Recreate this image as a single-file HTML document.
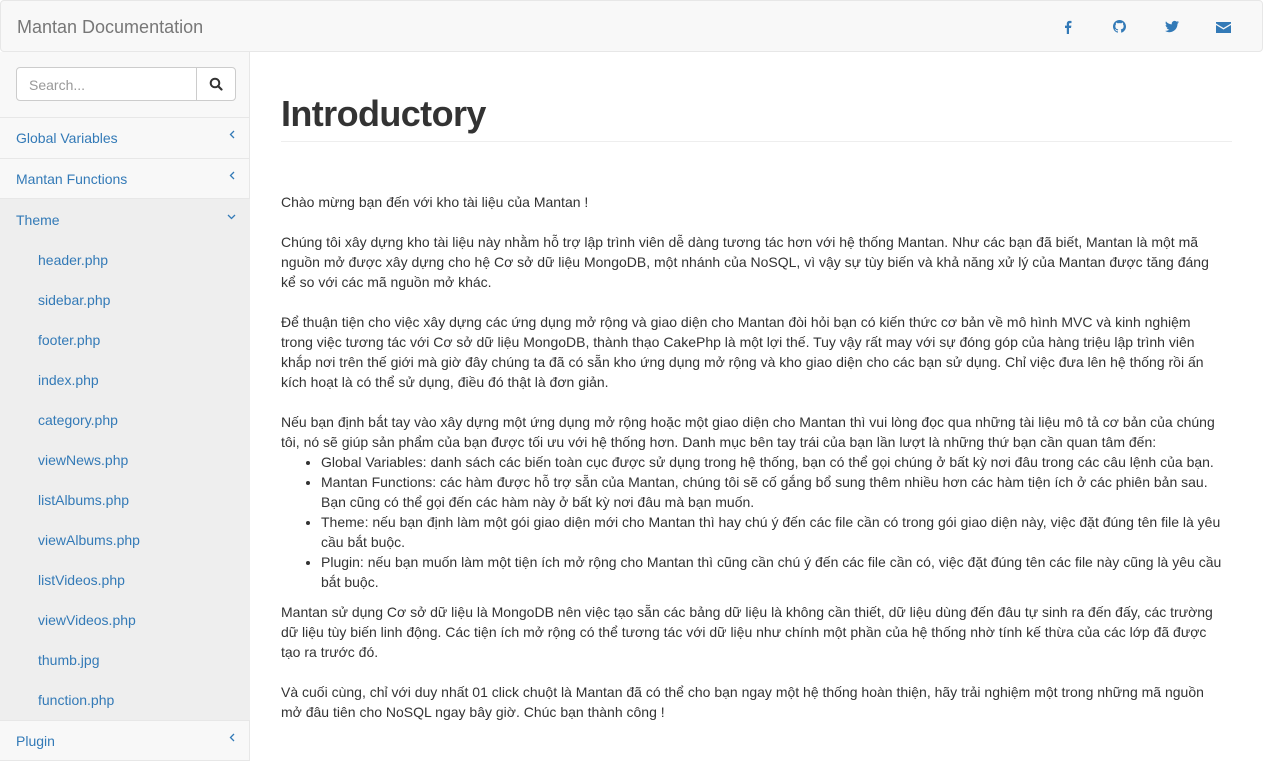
<!DOCTYPE html>
<html><head><meta charset="utf-8"><style>
*{box-sizing:border-box;margin:0;padding:0}
body{width:1263px;height:761px;overflow:hidden;background:#fff;font-family:"Liberation Sans","Helvetica Neue",Arial,sans-serif;font-size:14px;color:#333;position:relative}
.nav{position:absolute;left:0;top:0;width:1263px;height:52px;background:#f8f8f8;border:1px solid #e7e7e7;border-radius:4px}
.brand{position:absolute;left:16px;top:15px;font-size:18px;color:#777;line-height:22px}
.ic{position:absolute;top:19px}
.side{position:absolute;left:0;top:52px;width:250px;height:709px;background:#f8f8f8;border-right:1px solid #e7e7e7}
.search{position:absolute;left:16px;top:15px;width:220px;height:34px;border:1px solid #ccc;border-radius:4px;background:#fff}
.search span{position:absolute;left:12px;top:9px;color:#999;font-size:14px;line-height:16px}
.search .btn{position:absolute;right:0;top:-1px;width:39px;height:34px;border-left:1px solid #ccc}
.item{position:absolute;left:0;width:250px;height:41px;border-top:1px solid #e7e7e7;color:#337ab7;padding-left:16px;line-height:40px}
.item .ch{position:absolute;right:15px;top:12px}
.sub{position:absolute;left:38px;color:#337ab7;line-height:20px}
h1{position:absolute;left:281px;top:93px;font-size:36px;font-weight:bold;line-height:42px;color:#333;letter-spacing:-0.6px}
.hr{position:absolute;left:281px;top:141px;width:951px;height:1px;background:#eee}
.t{position:absolute;left:281px;line-height:20px;white-space:nowrap}
ul{position:absolute;left:281px;top:452px;padding-left:40px;line-height:20px;white-space:nowrap}
</style></head><body>
<div class="nav"><div class="brand">Mantan Documentation</div>
<svg class="ic" style="left:1063px" width="8" height="14" viewBox="0 0 8 14"><path d="M5 14V8h2l.4-2.4H5V4.2c0-.7.2-1.1 1.1-1.1H7.5V1C7.2.9 6.5.9 5.7.9 4 .9 2.8 1.9 2.8 3.8v1.8H1V8h1.8v6z" fill="#337ab7"/></svg>
<svg class="ic" style="left:1112px" width="13" height="13" viewBox="0 0 16 16"><path fill="#337ab7" d="M8 0C3.6 0 0 3.6 0 8c0 3.5 2.3 6.5 5.5 7.6.4.1.5-.2.5-.4v-1.4c-2.2.5-2.7-1-2.7-1-.4-.9-.9-1.200-.9-1.2-.7-.5.1-.5.1-.5.8.1 1.2.8 1.2.8.7 1.2 1.9.9 2.3.7.1-.5.3-.9.5-1.1-1.8-.2-3.6-.9-3.6-4 0-.9.3-1.6.8-2.1-.1-.2-.4-1 .1-2.100 0 0 .7-.2 2.2.8.6-.2 1.3-.3 2-.3s1.4.1 2 .3c1.5-1 2.2-.8 2.2-.8.4 1.1.2 1.9.1 2.1.5.6.8 1.3.8 2.1 0 3.1-1.9 3.7-3.6 3.9.3.3.5.8.5 1.5v2.2c0 .2.1.5.6.4C13.7 14.5 16 11.5 16 8c0-4.4-3.6-8-8-8z"/></svg>
<svg class="ic" style="left:1164px" width="14" height="13" viewBox="0 0 16 13"><path fill="#337ab7" d="M16 1.5c-.6.3-1.2.4-1.9.5.7-.4 1.2-1 1.4-1.8-.6.4-1.3.6-2.1.8C12.8.4 12 0 11 0 9.2 0 7.7 1.5 7.7 3.3c0 .3 0 .5.1.7C5.1 3.9 2.7 2.6 1.1.6.8 1.1.7 1.6.7 2.3c0 1.1.6 2.1 1.5 2.7-.5 0-1-.2-1.5-.4 0 1.6 1.1 2.9 2.6 3.2-.3.1-.6.1-.9.1-.2 0-.4 0-.6-.1.4 1.3 1.6 2.3 3.1 2.3-1.1.9-2.5 1.4-4.1 1.4H0c1.5.9 3.2 1.5 5 1.5 6 0 9.3-5 9.3-9.3v-.4c.7-.5 1.2-1.1 1.700-1.8z"/></svg>
<svg class="ic" style="left:1215px;top:21px" width="15" height="11" viewBox="0 0 15 11"><path fill="#337ab7" d="M0 0h15v1.5L7.5 6 0 1.5zM0 3l7.5 4.5L15 3v8H0z"/></svg>
</div>
<div class="side">
<div class="search"><span>Search...</span><div class="btn"><svg style="position:absolute;left:12px;top:10px" width="14" height="14" viewBox="0 0 14 14"><circle cx="6" cy="6" r="4.3" fill="none" stroke="#333" stroke-width="2"/><path d="M9 9l3.5 3.5" stroke="#333" stroke-width="2.2" stroke-linecap="round"/></svg></div></div>
<div class="item" style="top:65px">Global Variables<svg class="ch" width="6" height="9" viewBox="0 0 6 9"><path d="M5 1L1.5 4.5 5 8" fill="none" stroke="#337ab7" stroke-width="1.3"/></svg></div>
<div class="item" style="top:106px">Mantan Functions<svg class="ch" width="6" height="9" viewBox="0 0 6 9"><path d="M5 1L1.5 4.5 5 8" fill="none" stroke="#337ab7" stroke-width="1.3"/></svg></div>
<div class="item" style="top:146px;height:522px;background:#eee;line-height:42px">Theme<svg style="position:absolute;right:14px;top:15px" width="9" height="6" viewBox="0 0 9 6"><path d="M1 1l3.5 3.5L8 1" fill="none" stroke="#337ab7" stroke-width="1.3"/></svg></div>
<div class="sub" style="top:198px">header.php</div>
<div class="sub" style="top:238px">sidebar.php</div>
<div class="sub" style="top:278px">footer.php</div>
<div class="sub" style="top:318px">index.php</div>
<div class="sub" style="top:358px">category.php</div>
<div class="sub" style="top:398px">viewNews.php</div>
<div class="sub" style="top:438px">listAlbums.php</div>
<div class="sub" style="top:478px">viewAlbums.php</div>
<div class="sub" style="top:518px">listVideos.php</div>
<div class="sub" style="top:558px">viewVideos.php</div>
<div class="sub" style="top:598px">thumb.jpg</div>
<div class="sub" style="top:638px">function.php</div>
<div class="item" style="top:668px;border-bottom:1px solid #e7e7e7">Plugin<svg class="ch" width="6" height="9" viewBox="0 0 6 9"><path d="M5 1L1.5 4.5 5 8" fill="none" stroke="#337ab7" stroke-width="1.3"/></svg></div>
</div>
<h1>Introductory</h1>
<div class="hr"></div>
<div class="t" style="top:192px">Chào mừng bạn đến với kho tài liệu của Mantan !</div>
<div class="t" style="top:232px">Chúng tôi xây dựng kho tài liệu này nhằm hỗ trợ lập trình viên dễ dàng tương tác hơn với hệ thống Mantan. Như các bạn đã biết, Mantan là một mã<br>nguồn mở được xây dựng cho hệ Cơ sở dữ liệu MongoDB, một nhánh của NoSQL, vì vậy sự tùy biến và khả năng xử lý của Mantan được tăng đáng<br>kể so với các mã nguồn mở khác.</div>
<div class="t" style="top:312px">Để thuận tiện cho việc xây dựng các ứng dụng mở rộng và giao diện cho Mantan đòi hỏi bạn có kiến thức cơ bản về mô hình MVC và kinh nghiệm<br>trong việc tương tác với Cơ sở dữ liệu MongoDB, thành thạo CakePhp là một lợi thế. Tuy vậy rất may với sự đóng góp của hàng triệu lập trình viên<br>khắp nơi trên thế giới mà giờ đây chúng ta đã có sẵn kho ứng dụng mở rộng và kho giao diện cho các bạn sử dụng. Chỉ việc đưa lên hệ thống rồi ấn<br>kích hoạt là có thể sử dụng, điều đó thật là đơn giản.</div>
<div class="t" style="top:412px">Nếu bạn định bắt tay vào xây dựng một ứng dụng mở rộng hoặc một giao diện cho Mantan thì vui lòng đọc qua những tài liệu mô tả cơ bản của chúng<br>tôi, nó sẽ giúp sản phẩm của bạn được tối ưu với hệ thống hơn. Danh mục bên tay trái của bạn lần lượt là những thứ bạn cần quan tâm đến:</div>
<ul>
<li>Global Variables: danh sách các biến toàn cục được sử dụng trong hệ thống, bạn có thể gọi chúng ở bất kỳ nơi đâu trong các câu lệnh của bạn.</li>
<li>Mantan Functions: các hàm được hỗ trợ sẵn của Mantan, chúng tôi sẽ cố gắng bổ sung thêm nhiều hơn các hàm tiện ích ở các phiên bản sau.<br>Bạn cũng có thể gọi đến các hàm này ở bất kỳ nơi đâu mà bạn muốn.</li>
<li>Theme: nếu bạn định làm một gói giao diện mới cho Mantan thì hay chú ý đến các file cần có trong gói giao diện này, việc đặt đúng tên file là yêu<br>cầu bắt buộc.</li>
<li>Plugin: nếu bạn muốn làm một tiện ích mở rộng cho Mantan thì cũng cần chú ý đến các file cần có, việc đặt đúng tên các file này cũng là yêu cầu<br>bắt buộc.</li>
</ul>
<div class="t" style="top:602px">Mantan sử dụng Cơ sở dữ liệu là MongoDB nên việc tạo sẵn các bảng dữ liệu là không cần thiết, dữ liệu dùng đến đâu tự sinh ra đến đấy, các trường<br>dữ liệu tùy biến linh động. Các tiện ích mở rộng có thể tương tác với dữ liệu như chính một phần của hệ thống nhờ tính kế thừa của các lớp đã được<br>tạo ra trước đó.</div>
<div class="t" style="top:682px">Và cuối cùng, chỉ với duy nhất 01 click chuột là Mantan đã có thể cho bạn ngay một hệ thống hoàn thiện, hãy trải nghiệm một trong những mã nguồn<br>mở đâu tiên cho NoSQL ngay bây giờ. Chúc bạn thành công !</div>
</body></html>
